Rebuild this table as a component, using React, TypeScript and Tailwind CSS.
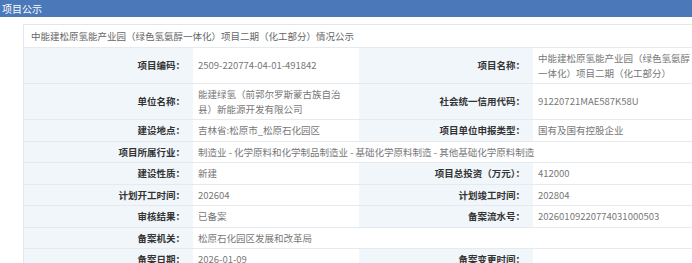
import React from "react";

// Datos de la tabla de publicidad del proyecto
type Cell = { label: string; value: string; span?: boolean };

const rows: Cell[][] = [
  [
    { label: "项目编码：", value: "2509-220774-04-01-491842" },
    { label: "项目名称：", value: "中能建松原氢能产业园（绿色氢氨醇一体化）项目二期（化工部分）" },
  ],
  [
    { label: "单位名称：", value: "能建绿氢（前郭尔罗斯蒙古族自治县）新能源开发有限公司" },
    { label: "社会统一信用代码：", value: "91220721MAE587K58U" },
  ],
  [
    { label: "建设地点：", value: "吉林省:松原市_松原石化园区" },
    { label: "项目单位申报类型：", value: "国有及国有控股企业" },
  ],
  [
    {
      label: "项目所属行业：",
      value: "制造业 - 化学原料和化学制品制造业 - 基础化学原料制造 - 其他基础化学原料制造",
      span: true,
    },
  ],
  [
    { label: "建设性质：", value: "新建" },
    { label: "项目总投资（万元）：", value: "412000" },
  ],
  [
    { label: "计划开工时间：", value: "202604" },
    { label: "计划竣工时间：", value: "202804" },
  ],
  [
    { label: "审核结果：", value: "已备案" },
    { label: "备案流水号：", value: "20260109220774031000503" },
  ],
  [{ label: "备案机关：", value: "松原石化园区发展和改革局", span: true }],
  [
    { label: "备案日期：", value: "2026-01-09" },
    { label: "备案变更时间：", value: "" },
  ],
];

const labelCls =
  "bg-[#f1f6fa] text-right pr-[8px] font-bold text-[#333] border-b border-[#e6e9ed] align-middle py-[3px]";
const valueCls =
  "bg-white text-left pl-[5px] pr-[12px] text-[#777] border-b border-[#e6e9ed] align-middle py-[3px]";

export default function App() {
  return (
    <div
      className="w-[692px] h-[263px] overflow-hidden bg-white text-[9.5px]"
      style={{ fontFamily: '"Noto Sans CJK SC", "Noto Sans", sans-serif' }}
    >
      {/* Barra de título */}
      <div className="h-[17px] bg-[#4a78b8] text-white pl-[2px] leading-[17px] text-[10px]">
        项目公示
      </div>

      {/* Contenedor principal */}
      <div className="mt-[7px] ml-[23px] w-[700px] border-t border-l border-[#e3e6ea]">
        <div className="h-[22px] leading-[22px] pl-[7px] text-[#666]">
          中能建松原氢能产业园（绿色氢氨醇一体化）项目二期（化工部分）情况公示
        </div>
        <table className="table-fixed border-collapse border-t border-[#e6e9ed] w-[684px]">
          <colgroup>
            <col className="w-[169px]" />
            <col className="w-[166px]" />
            <col className="w-[174px]" />
            <col className="w-[175px]" />
          </colgroup>
          <tbody>
            {rows.map((row, i) => (
              <tr key={i} className="leading-[14.5px]">
                {row.map((c, j) => (
                  <React.Fragment key={j}>
                    <td className={labelCls}>{c.label}</td>
                    <td className={valueCls} colSpan={c.span ? 3 : 1}>
                      {c.value}
                    </td>
                  </React.Fragment>
                ))}
              </tr>
            ))}
          </tbody>
        </table>
      </div>
    </div>
  );
}
